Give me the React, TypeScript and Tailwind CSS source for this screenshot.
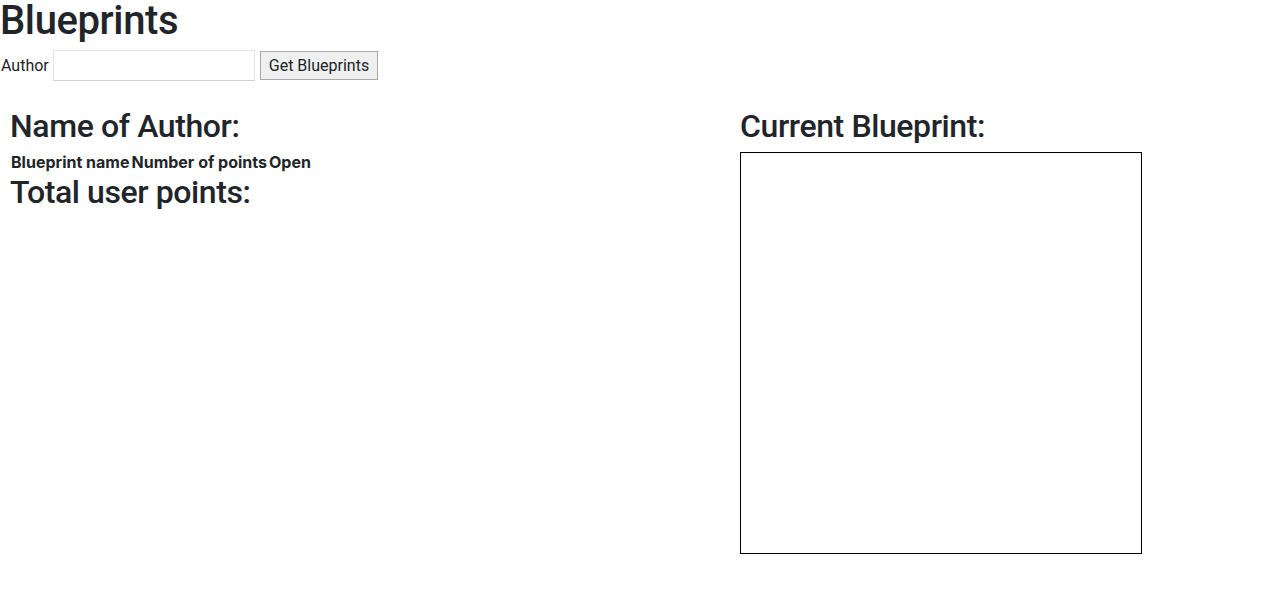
import React, { useState } from "react";

const App: React.FC = () => {
  const [author, setAuthor] = useState("");

  return (
    <div className="min-h-screen bg-white text-[#212529] font-['Roboto','Liberation_Sans',sans-serif]">
      <h1 className="h-[48px] text-[40px] leading-[42px] font-medium tracking-[-0.4px]">Blueprints</h1>

      <div className="flex items-center h-[32px] mt-[1px]">
        <label className="text-[16px] leading-6 ml-[1px] mt-[2px]">Author</label>
        <input
          value={author}
          onChange={(e) => setAuthor(e.target.value)}
          className="ml-[4px] w-[202px] h-[31px] border border-[#e5e5e5] border-b-[#cfcfcf] px-1 text-[16px] outline-none"
          aria-label="Author"
        />
        <button
          type="button"
          className="ml-[5px] mt-[1px] h-[29px] px-[8px] bg-[#efefef] border border-[#a9a9a9] text-[16px] leading-5"
        >
          Get Blueprints
        </button>
      </div>

      <div className="flex mt-[26px]">
        <div className="w-[740px] pl-[10px]">
          <h2 className="text-[32px] leading-[38px] font-medium tracking-[-0.4px] mb-[7px]">Name of Author:</h2>
          <table className="mb-[1px]">
            <thead>
              <tr>
                <th className="px-[1px] py-0 text-[16px] leading-[20px] font-bold text-left font-['Inter',sans-serif]">Blueprint name</th>
                <th className="px-[1px] py-0 text-[16px] leading-[20px] font-bold text-left font-['Inter',sans-serif]">Number of points</th>
                <th className="px-[1px] py-0 text-[16px] leading-[20px] font-bold text-left font-['Inter',sans-serif]">Open</th>
              </tr>
            </thead>
            <tbody></tbody>
          </table>
          <h2 className="text-[32px] leading-[38px] font-medium tracking-[-0.4px]">Total user points:</h2>
        </div>

        <div>
          <h2 className="text-[32px] leading-[38px] font-medium tracking-[-0.4px] mb-[7px]">Current Blueprint:</h2>
          <canvas width={400} height={400} className="block border border-black" />
        </div>
      </div>
    </div>
  );
};

export default App;
